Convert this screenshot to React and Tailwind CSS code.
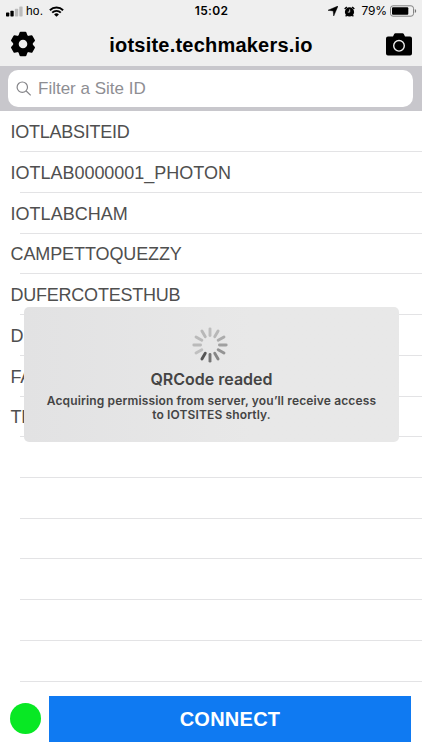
const rows = [
  { name: 'IOTLABSITEID', spacing: 'tracking-[-0.25px]' },
  { name: 'IOTLAB0000001_PHOTON', spacing: 'tracking-[-0.02px]' },
  { name: 'IOTLABCHAM', spacing: 'tracking-[0.03px]' },
  { name: 'CAMPETTOQUEZZY', spacing: 'tracking-[-0.1px]' },
  { name: 'DUFERCOTESTHUB', spacing: 'tracking-[-0.23px]' },
  { name: 'DUFERCO', spacing: 'tracking-[-0.2px]' },
  { name: 'FABLAB', spacing: 'tracking-[-0.2px]' },
  { name: 'TECHMAKERS', spacing: 'tracking-[-0.2px]' },
  {}, {}, {}, {}, {}, {},
];

const blades = ['#bdbdbd', '#b8b8b8', '#acacac', '#a0a0a0', '#949494', '#868686', '#757575', '#555555', '#c0c0c0', '#bababa', '#bababa', '#b8b8b8'];

function Signal() {
  return (
    <svg className="h-[11px] w-[17px]" viewBox="0 0 17 11">
      <rect x="0" y="6.6" width="3.3" height="3.8" rx=".7" />
      <rect x="4.4" y="4.8" width="3.3" height="5.6" rx=".7" />
      <rect x="8.9" y="2.7" width="3.3" height="7.7" rx=".7" fill="#bbb" />
      <rect x="13.3" y=".4" width="3.3" height="10" rx=".7" fill="#bbb" />
    </svg>
  );
}

function Wifi() {
  return (
    <svg className="h-[11px] w-[15px]" viewBox="0 0 15 11" fill="none" stroke="#000" strokeWidth="1.9">
      <path d="M.9 4.2a9.4 9.4 0 0 1 13.2 0M3.2 6.6a6.1 6.1 0 0 1 8.6 0" />
      <path d="M7.5 10.8 5.1 8.4a3.4 3.4 0 0 1 4.8 0Z" fill="#000" stroke="none" />
    </svg>
  );
}

function Gear() {
  return (
    <svg className="h-[26px] w-[26px]" viewBox="-13 -13 26 26">
      {[0, 60, 120, 180, 240, 300].map((a) => (
        <path key={a} transform={`rotate(${a})`} d="M-5-7 -3.4-11.5Q-3.2-12.3-2.4-12.3H2.4Q3.2-12.3 3.4-11.5L5-7Z" />
      ))}
      <circle r="7" fill="none" stroke="#000" strokeWidth="5.4" />
    </svg>
  );
}

function Camera() {
  return (
    <svg className="h-[23px] w-[26px]" viewBox="0 0 26 23">
      <path d="M2 3.5H7L8.2 1Q8.6.3 9.4.3H16.6Q17.4.3 17.8 1L19 3.5H24Q26 3.5 26 5.5V20.5Q26 22.5 24 22.5H2Q0 22.5 0 20.5V5.5Q0 3.5 2 3.5Z" />
      <circle cx="13" cy="12.8" r="5.3" fill="none" stroke="#efefef" strokeWidth="1.4" />
    </svg>
  );
}

function StatusBar() {
  return (
    <div className="flex h-[22px] items-center pl-[6px] pr-[5px] text-[12px] leading-[22px]">
      <div className="flex flex-1 items-center">
        <Signal />
        <span className="ml-[3px] w-[20px] whitespace-nowrap tracking-[0.2px]">ho.</span>
        <span className="ml-[3px] flex"><Wifi /></span>
      </div>
      <span className="font-['Inter'] text-[12px] font-semibold tracking-[0.35px]">15:02</span>
      <div className="flex flex-1 items-center justify-end">
        <svg className="mr-[6px] h-[10px] w-[10px]" viewBox="0 0 10 10"><path d="M10 0 5.7 10 5.2 4.9 0 4.3Z" stroke="#000" strokeWidth=".5" /></svg>
        <svg className="mr-[6px] h-[11px] w-[11px]" viewBox="0 0 11 11">
          <circle cx="5.5" cy="5.9" r="4.6" />
          <path d="M.7 3 2.8.9M8.2.9 10.3 3M2.6 9.2 1.7 10.4M8.4 9.2 9.3 10.4" stroke="#000" strokeWidth="1.4" />
          <path d="M5.7 3.4V6.1H3.8" fill="none" stroke="#efefef" strokeWidth=".8" />
        </svg>
        <span className="font-['Inter'] text-[12px] tracking-[-0.1px]">79%</span>
        <svg className="ml-[3px] h-[12px] w-[27px]" viewBox="0 0 27 12">
          <rect x=".5" y=".8" width="23" height="10.4" rx="2.5" fill="none" stroke="#777" strokeWidth=".9" />
          <rect x="2" y="2.2" width="16.3" height="7.6" rx="1" />
          <path d="M24.8 4V8Q26.2 7.3 26.2 6T24.8 4" fill="#777" />
        </svg>
      </div>
    </div>
  );
}

function Spinner() {
  return (
    <svg className="mr-[3px] h-[36px] w-[36px]" viewBox="-18 -18 36 36">
      {blades.map((c, i) => (
        <rect key={i} x="-1.45" y="-17.6" width="2.9" height="9.6" rx="1.45" fill={c} transform={`rotate(${i * 30})`} />
      ))}
    </svg>
  );
}

export default function App() {
  return (
    <div className="relative flex h-[750px] w-[422px] flex-col overflow-hidden bg-white font-['Liberation_Sans',sans-serif] text-black">
      <header className="h-[66px] shrink-0 bg-[#efefef]">
        <StatusBar />
        <div className="flex h-[44px] items-center justify-between pl-[10px] pr-[10px]">
          <Gear />
          <h1 className="pt-[2px] text-[20px] font-bold leading-[42px] tracking-[0.22px]">iotsite.techmakers.io</h1>
          <Camera />
        </div>
      </header>
      <div className="h-[45px] shrink-0 bg-[#c8c7cc] pl-[8px] pr-[9px] pt-[4px]">
        <div className="flex h-[37px] items-center rounded-[10px] bg-white pl-[8px] text-[#8e8e93]">
          <svg className="h-[16px] w-[16px]" viewBox="0 0 16 16" fill="none" stroke="#858589" strokeWidth="1.2">
            <circle cx="6.3" cy="6.2" r="5.2" /><path d="m10.2 10 4.5 4.4" />
          </svg>
          <span className="ml-[6px] text-[17px] tracking-[0px]">Filter a Site ID</span>
        </div>
      </div>
      <ul className="shrink-0">
        {rows.map((row, i) => (
          <li key={i} className="flex h-[40.75px] flex-col text-[18px] text-[#4f4f4f]">
            <span className={`h-[40px] pl-[10.5px] pt-[1px] leading-[40px] ${row.spacing ?? ''}`}>{row.name}</span>
            <div className="ml-[20px] h-px shrink-0 bg-[#e3e3e5]" />
          </li>
        ))}
      </ul>
      <footer className="flex flex-1 items-center pl-[10px] pr-[11px] pt-[6px]">
        <div className="h-[31px] w-[31px] rounded-full bg-[#08e824]" />
        <button className="ml-[8px] h-[46px] flex-1 bg-[#0f7af2] pt-px text-[20px] font-bold leading-[45px] tracking-[0.25px] text-white">CONNECT</button>
      </footer>
      <div className="absolute left-[24px] top-[307px] flex h-[135px] w-[375px] flex-col items-center rounded-[5px] bg-linear-to-r from-[#e2e2e3] to-[#e8e8e8] to-60% pt-[20px] font-['Inter',sans-serif] text-[#444]">
        <Spinner />
        <h2 className="mt-[5px] whitespace-nowrap text-[16px] font-semibold leading-[22px]">QRCode readed</h2>
        <p className="mt-[4px] whitespace-nowrap text-center text-[12px] font-semibold leading-[14px] tracking-[0.14px]">
          Acquiring permission from server, you’ll receive access<br />to IOTSITES shortly.
        </p>
      </div>
    </div>
  );
}
